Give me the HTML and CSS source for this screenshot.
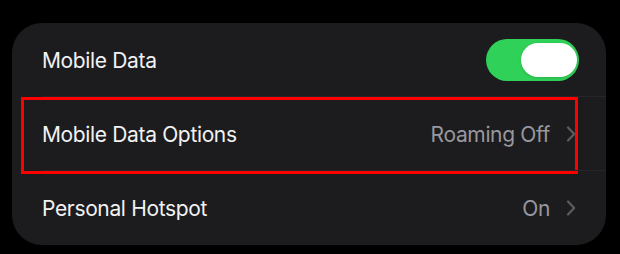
FILE: index.html
```html
<!DOCTYPE html>
<html lang="en">
  <head>
    <meta charset="UTF-8" />
    <meta name="viewport" content="width=device-width, initial-scale=1.0" />
    <title>Mobile Data</title>
    <link rel="stylesheet" href="styles.css">
  </head>
  <body>
    <main class="settings">
      <div class="row">
        <span class="row__label">Mobile Data</span>
        <span class="toggle toggle--on"><span class="toggle__knob"></span></span>
      </div>
      <div class="row row--marked">
        <span class="row__label">Mobile Data Options</span>
        <span class="row__value">Roaming Off</span>
        <svg class="chevron" width="10" height="16" viewBox="0 0 10 16">
          <path d="M2 1.5 L8.2 8 L2 14.5" fill="none" stroke="currentColor" stroke-width="2.2" stroke-linecap="round" stroke-linejoin="round"/>
        </svg>
        <span class="highlight"></span>
      </div>
      <div class="row">
        <span class="row__label">Personal Hotspot</span>
        <span class="row__value">On</span>
        <svg class="chevron" width="10" height="16" viewBox="0 0 10 16">
          <path d="M2 1.5 L8.2 8 L2 14.5" fill="none" stroke="currentColor" stroke-width="2.2" stroke-linecap="round" stroke-linejoin="round"/>
        </svg>
      </div>
    </main>
  </body>
</html>
```

FILE: styles.css
```css
body {
  margin: 0;
  background: #000;
  font-family: Inter, "Noto Sans", sans-serif;
}
.settings {
  margin: 23px 14px 9px 12px;
  background: #1c1c1e;
  border-radius: 30px;
  overflow: hidden;
}
.row {
  position: relative;
  display: flex;
  align-items: center;
  height: 74px;
  padding: 0 30px;
}
.row + .row::before {
  content: "";
  position: absolute;
  top: -1px;
  left: 30px;
  right: 0;
  border-top: 1px solid #262628;
}
.row__label {
  flex: 1;
  font-size: 21px;
  letter-spacing: -0.35px;
  color: #f2f2f4;
}
.row__value {
  font-size: 21px;
  letter-spacing: -0.35px;
  color: #98989e;
  margin-right: 16px;
}
.chevron {
  color: #5b5b60;
}
.toggle {
  display: flex;
  align-items: center;
  justify-content: flex-end;
  width: 93px;
  height: 42px;
  margin-right: -3px;
  border-radius: 21px;
  background: #30d158;
  box-sizing: border-box;
  padding: 0 2px;
}
.toggle__knob {
  width: 56px;
  height: 34px;
  border-radius: 17px;
  background: #fff;
  box-shadow: 0 1px 3px rgba(0, 0, 0, 0.15);
}
.highlight {
  position: absolute;
  left: 9px;
  right: 28px;
  top: 0;
  height: 77px;
  border: 3px solid #ff0000;
  box-sizing: border-box;
}
```
